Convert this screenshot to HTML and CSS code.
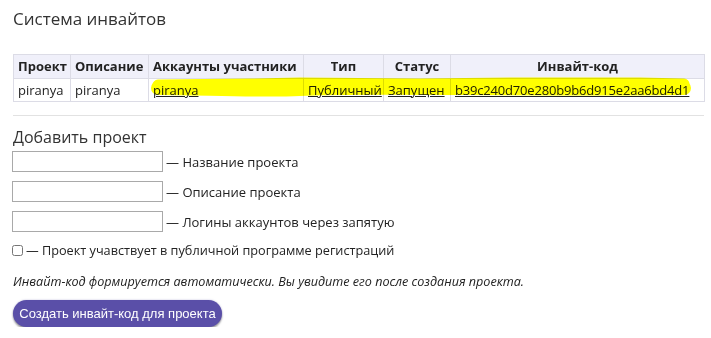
FILE: index.html
```html
<!DOCTYPE html>
<html lang="ru">
<head>
<meta charset="utf-8">
<link rel="stylesheet" href="styles.css">
</head>
<body>
<h1 class="title">Система инвайтов</h1>
<div class="table-wrap">
  <table class="invites">
    <thead>
      <tr>
        <th class="c1">Проект</th>
        <th class="c2">Описание</th>
        <th class="c3">Аккаунты участники</th>
        <th class="c4 center">Тип</th>
        <th class="c5 center">Статус</th>
        <th class="c6 center">Инвайт-код</th>
      </tr>
    </thead>
    <tbody>
      <tr>
        <td>piranya</td>
        <td>piranya</td>
        <td><a href="#">piranya</a></td>
        <td><a href="#">Публичный</a></td>
        <td><a href="#">Запущен</a></td>
        <td><a href="#" class="hash">b39c240d70e280b9b6d915e2aa6bd4d1</a></td>
      </tr>
    </tbody>
  </table>
  <svg class="marker" width="711" height="50" viewBox="0 0 711 50">
    <path d="M158 34 C 200 34, 260 37, 300 35 S 420 34, 460 34 S 600 35, 684 34" fill="none" stroke="#ffff00" stroke-width="14" stroke-linecap="round"/>
    <path d="M158 31 L 250 30 L 300 29 L 420 30 L 520 29 L 640 29 L 684 30" fill="none" stroke="#ffff00" stroke-width="11" stroke-linecap="round"/>
  </svg>
</div>
<hr class="sep">
<h2 class="subtitle">Добавить проект</h2>
<form class="add-form">
  <label class="field"><input type="text" class="text-input"><span>— Название проекта</span></label>
  <label class="field"><input type="text" class="text-input"><span>— Описание проекта</span></label>
  <label class="field"><input type="text" class="text-input"><span>— Логины аккаунтов через запятую</span></label>
  <label class="check"><input type="checkbox" class="checkbox"><span>— Проект учавствует в публичной программе регистраций</span></label>
  <p class="note">Инвайт-код формируется автоматически. Вы увидите его после создания проекта.</p>
  <button type="button" class="submit">Создать инвайт-код для проекта</button>
</form>
</body>
</html>
```
FILE: styles.css
```css
html, body {
  margin: 0;
  padding: 0;
  background: #fff;
}
body {
  padding: 0 8px 0 13px;
  font-family: "Open Sans", "DejaVu Sans", sans-serif;
  font-size: 13px;
  color: #222;
}
.title {
  margin: 6px 0 0;
  font-size: 17px;
  line-height: 25px;
  font-weight: 400;
  color: #333;
}
.table-wrap {
  position: relative;
  margin-top: 23px;
}
.invites {
  border-collapse: collapse;
  width: 691px;
  table-layout: fixed;
}
.invites th, .invites td {
  box-sizing: border-box;
  border: 1px solid #dcdce6;
  padding: 2px 4px;
  line-height: 18px;
  text-align: left;
  white-space: nowrap;
}
.invites th {
  background: #f0f0fa;
  font-weight: 700;
  color: #222;
  padding: 2px 4px 3px;
}
.invites th.center { text-align: center; }
.c1 { width: 57px; }
.c2 { width: 78px; }
.c3 { width: 155px; }
.c4 { width: 80px; }
.c5 { width: 67px; }
.c6 { width: 254px; }
.invites a {
  color: #222;
  text-decoration: underline;
}
.invites .hash {
  letter-spacing: -0.18px;
}
.marker {
  position: absolute;
  left: -13px;
  top: 0;
  width: 711px;
  height: 50px;
  mix-blend-mode: multiply;
  pointer-events: none;
}
.sep {
  margin: 13px 0 0;
  width: 691px;
  border: 0;
  border-top: 1px solid #e2e2e2;
}
.subtitle {
  margin: 9px 0 0;
  font-size: 16px;
  line-height: 24px;
  font-weight: 400;
  color: #333;
}
.add-form {
  display: flex;
  flex-direction: column;
  align-items: flex-start;
}
.field {
  display: flex;
  align-items: center;
  gap: 3px;
  margin-top: 0;
  height: 25px;
}
.field + .field { margin-top: 5px; }
.text-input {
  box-sizing: border-box;
  width: 151px;
  height: 21px;
  margin: 0 0 0 -1px;
  border: 1px solid #a9a9a9;
  padding: 1px 2px;
  background: #fff;
}
.check {
  display: flex;
  align-items: center;
  gap: 3px;
  margin-top: 7px;
  font-size: 12.7px;
}
.checkbox {
  margin: 0 0 0 -1px;
  width: 11px;
  height: 11px;
}
.note {
  margin: 14px 0 0;
  font-style: italic;
  font-size: 12.6px;
  line-height: 18px;
}
.submit {
  margin-top: 9px;
  height: 27px;
  width: 209px;
  border: 0;
  border-radius: 14px;
  background: #5a4fa8;
  color: #fff;
  font-family: "Liberation Sans", Arial, sans-serif;
  font-size: 13px;
  padding: 0;
  white-space: nowrap;
  box-shadow: 0 2px 2px rgba(0, 0, 0, 0.35), 0 0 2px rgba(90, 79, 168, 0.4);
}
```
